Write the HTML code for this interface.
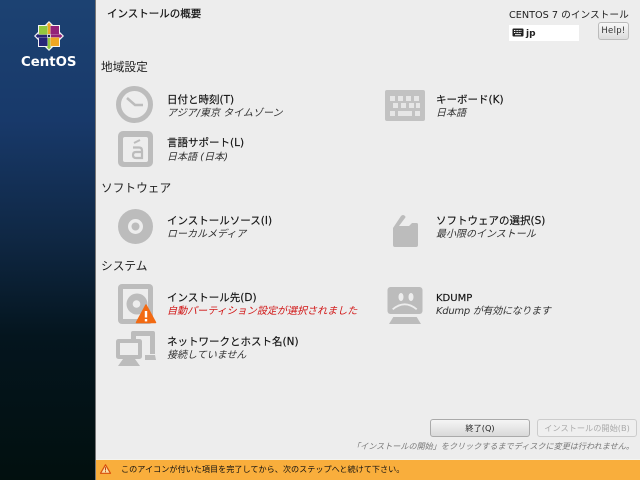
<!DOCTYPE html>
<html lang="ja"><head><meta charset="utf-8"><title>インストールの概要</title>
<style>
html,body{margin:0;padding:0;width:640px;height:480px;overflow:hidden;background:#ededed}
body{position:relative;font-family:"DejaVu Sans","Noto Sans CJK JP",sans-serif;color:#1a1a1a}
#w{position:absolute;left:0;top:0;width:640px;height:480px;overflow:hidden;filter:blur(.3px)}
.a{position:absolute;white-space:nowrap;line-height:13px}
.t{font-size:10.500px;color:#111;-webkit-text-stroke:.15px #111}
.s{font-size:10px;font-style:italic;color:#333}
.h{font-size:11.700px;color:#222;line-height:14px}
svg{position:absolute;overflow:visible}
#side{position:absolute;left:0;top:0;width:95px;height:480px;background:linear-gradient(180deg,#1c4272 0,#18396a 25%,#0f2743 50%,#04151e 70%,#02100f 100%)}
#line{position:absolute;left:95px;top:0;width:1px;height:480px;background:#777}
#bar{position:absolute;left:96px;top:459px;width:544px;height:21px;background:#f9ae3c;border-top:1px solid #f4f4f0;box-sizing:border-box}
.b{position:absolute;box-sizing:border-box;border-radius:3px;text-align:center;font-size:8.200px}
</style></head><body><div id="w">
<div id="side"></div><div id="line"></div>

<svg style="left:34px;top:21px" width="30" height="30" viewBox="0 0 30 30">
<polygon points="15,0 19,4 26,4 26,11 30,15 26,19 26,26 19,26 15,30 11,26 4,26 4,19 0,15 4,11 4,4 11,4" fill="#f4f4f4"/>
<rect x="5" y="5" width="8.500" height="8.500" fill="#93c83e"/>
<rect x="16.500" y="5" width="8.500" height="8.500" fill="#932279"/>
<rect x="16.500" y="16.500" width="8.500" height="8.500" fill="#efa724"/>
<rect x="5" y="16.500" width="8.500" height="8.500" fill="#262577"/>
<polygon points="15,1.500 17.500,4.500 16.200,4.500 16.200,13 13.800,13 13.800,4.500 12.500,4.500" fill="#efa724"/>
<polygon points="28.500,15 25.500,17.500 25.500,16.200 17,16.200 17,13.800 25.500,13.800 25.500,12.500" fill="#932279"/>
<polygon points="15,28.500 12.500,25.500 13.800,25.500 13.800,17 16.200,17 16.200,25.500 17.500,25.500" fill="#93c83e"/>
<polygon points="1.500,15 4.500,12.500 4.500,13.800 13,13.800 13,16.200 4.500,16.200 4.500,17.500" fill="#262577"/>
<rect x="13.800" y="13.800" width="2.400" height="2.400" fill="#1b2a55"/>
</svg>
<div class="a" style="left:21px;top:54px;font:bold 13.300px/17px 'DejaVu Sans',sans-serif;color:#fff">CentOS</div>

<div class="a" style="left:107px;top:8px;font-size:10.500px;color:#111;-webkit-text-stroke:.2px #111">インストールの概要</div>
<div class="a" style="left:509px;top:9px;font-size:9.700px;color:#222">CENTOS 7 のインストール</div>
<div class="a" style="left:509px;top:25px;width:70px;height:16px;background:#fff"></div>
<svg style="left:512px;top:28px" width="12" height="9" viewBox="0 0 12 9"><rect x=".5" y=".5" width="11" height="8" rx="1" fill="#222"/><path d="M2 2.500h8M2 4.500h8" stroke="#fff" stroke-width="1" stroke-dasharray="1 .6"/><path d="M3 6.700h6" stroke="#fff"/></svg>
<div class="a" style="left:526px;top:28px;font-size:9px;font-weight:bold;color:#222">jp</div>
<div class="b" style="left:598px;top:22px;width:31px;height:18px;border:1px solid #bbb;background:linear-gradient(#f7f7f7,#dcdcdc);line-height:16px;color:#333;font-size:8.500px;letter-spacing:.3px">Help!</div>

<div class="a h" style="left:101px;top:60px">地域設定</div>
<div class="a h" style="left:101px;top:181px">ソフトウェア</div>
<div class="a h" style="left:101px;top:259px">システム</div>

<!-- clock -->
<svg style="left:115px;top:85px" width="40" height="38" viewBox="0 0 40 38"><circle cx="19.500" cy="19.500" r="16" fill="none" stroke="#bcbcbc" stroke-width="5"/><path d="M12 13L20 20H28" fill="none" stroke="#bcbcbc" stroke-width="2.500"/></svg>
<div class="a t" style="left:167px;top:94px">日付と時刻(T)</div>
<div class="a s" style="left:167px;top:107px">アジア/東京 タイムゾーン</div>

<!-- lang -->
<svg style="left:118px;top:131px" width="35" height="36" viewBox="0 0 35 36"><rect x="0" y="0" width="35" height="36" rx="5" fill="#bcbcbc"/><rect x="5" y="6" width="25" height="25" rx="2" fill="#ededed"/><path d="M16 12l6-3" stroke="#bcbcbc" stroke-width="2"/><path d="M15 16.500h6q3 0 3 3V27H18q-3 0-3-3t3-3h6" fill="none" stroke="#bcbcbc" stroke-width="2.200"/></svg>
<div class="a t" style="left:167px;top:137px">言語サポート(L)</div>
<div class="a s" style="left:167px;top:151px">日本語 (日本)</div>

<!-- keyboard -->
<svg style="left:385px;top:90px" width="40" height="31" viewBox="0 0 40 31"><rect width="40" height="31" rx="2" fill="#c2c2c2"/><g fill="#e6e6e6"><rect x="5" y="6" width="5" height="5"/><rect x="13" y="6" width="5" height="5"/><rect x="21" y="6" width="5" height="5"/><rect x="29" y="6" width="5" height="5"/><rect x="8" y="13" width="5" height="5"/><rect x="16" y="13" width="5" height="5"/><rect x="24" y="13" width="5" height="5"/><rect x="31" y="13" width="4" height="5"/><rect x="5" y="21" width="5" height="5"/><rect x="13" y="21" width="14" height="5"/><rect x="30" y="21" width="5" height="5"/></g></svg>
<div class="a t" style="left:436px;top:94px">キーボード(K)</div>
<div class="a s" style="left:436px;top:107px">日本語</div>

<!-- disc -->
<svg style="left:118px;top:209px" width="35" height="35" viewBox="0 0 35 35"><circle cx="17.500" cy="17.500" r="17.500" fill="#bcbcbc"/><circle cx="17.500" cy="17.500" r="7.500" fill="#ededed"/><circle cx="17.500" cy="17.500" r="4" fill="#bcbcbc"/></svg>
<div class="a t" style="left:167px;top:215px">インストールソース(I)</div>
<div class="a s" style="left:167px;top:228px">ローカルメディア</div>

<!-- package -->
<svg style="left:392px;top:214px" width="26" height="34" viewBox="0 0 26 34"><path d="M1 14L9 2Q11 0 13 2Q14 3 13 4L7 12H17L20 9H24.500Q26 9 26 10.500V31Q26 33 24 33H3Q1 33 1 31z" fill="#bcbcbc"/></svg>
<div class="a t" style="left:436px;top:215px">ソフトウェアの選択(S)</div>
<div class="a s" style="left:436px;top:228px">最小限のインストール</div>

<!-- disk -->
<svg style="left:118px;top:284px" width="40" height="42" viewBox="0 0 40 42"><rect width="35" height="40" rx="4" fill="#bcbcbc"/><rect x="5" y="5" width="25" height="30" fill="#ededed"/><circle cx="19" cy="20" r="10.500" fill="#bcbcbc"/><circle cx="18.500" cy="20" r="3.800" fill="#ededed"/><path d="M28 21L37.500 38.500H18.500z" fill="#f26a13" stroke="#f26a13" stroke-width="1.500" stroke-linejoin="round"/><rect x="26.800" y="27" width="2.400" height="6.500" fill="#fff"/><rect x="26.800" y="35" width="2.400" height="2.400" fill="#fff"/></svg>
<div class="a t" style="left:167px;top:292px">インストール先(D)</div>
<div class="a s" style="left:167px;top:305px;color:#d11414;font-size:10.050px">自動パーティション設定が選択されました</div>

<!-- network -->
<svg style="left:115px;top:330px" width="42" height="36" viewBox="0 0 42 36"><path d="M16 3q0-2 2-2h20q2 0 2 2v21h-5V6H21v3h-5zM30 25h10l1 5H30z" fill="#bcbcbc"/><rect x="1" y="9" width="26" height="20" rx="2.500" fill="#bcbcbc"/><rect x="5" y="13" width="18" height="12" fill="#ededed"/><path d="M8 29h12l5 7H3z" fill="#bcbcbc"/></svg>
<div class="a t" style="left:167px;top:336px">ネットワークとホスト名(N)</div>
<div class="a s" style="left:167px;top:349px">接続していません</div>

<!-- kdump -->
<svg style="left:387px;top:287px" width="36" height="38" viewBox="0 0 36 38"><rect width="35" height="27" x=".5" rx="3" fill="#bcbcbc"/><ellipse cx="14" cy="10" rx="2.500" ry="4" fill="#ededed"/><ellipse cx="24" cy="10" rx="2.500" ry="4" fill="#ededed"/><path d="M5.700 22.300q12-10 24 0" fill="none" stroke="#ededed" stroke-width="1.800"/><path d="M6.300 30h23.400l4.300 7H2z" fill="#bcbcbc"/></svg>
<div class="a t" style="left:436px;top:292px;font-size:10px">KDUMP</div>
<div class="a s" style="left:436px;top:305px;letter-spacing:-.28px">Kdump が有効になります</div>

<div class="b" style="left:430px;top:419px;width:100px;height:18px;border:1px solid #aaa;background:linear-gradient(#f5f5f5,#d9d9d9);line-height:17px;color:#222">終了(Q)</div>
<div class="b" style="left:537px;top:419px;width:100px;height:18px;border:1px solid #ccc;background:#efefef;line-height:17px;color:#aaa">インストールの開始(B)</div>
<div class="a" style="left:352px;top:440px;font-size:8.100px;font-style:italic;color:#777">「インストールの開始」をクリックするまでディスクに変更は行われません。</div>

<div id="bar"></div>
<svg style="left:100px;top:464px" width="11" height="10" viewBox="0 0 11 10"><path d="M5.500 .8L10.500 9.300H.5z" fill="#fbe0a8" stroke="#d8500c" stroke-width="1.200" stroke-linejoin="round"/><rect x="5" y="3.200" width="1" height="3.300" fill="#b8400a"/><rect x="5" y="7.200" width="1" height="1" fill="#b8400a"/></svg>
<div class="a" style="left:121px;top:463px;font-size:8.150px;color:#111">このアイコンが付いた項目を完了してから、次のステップへと続けて下さい。</div>
</div></body></html>
